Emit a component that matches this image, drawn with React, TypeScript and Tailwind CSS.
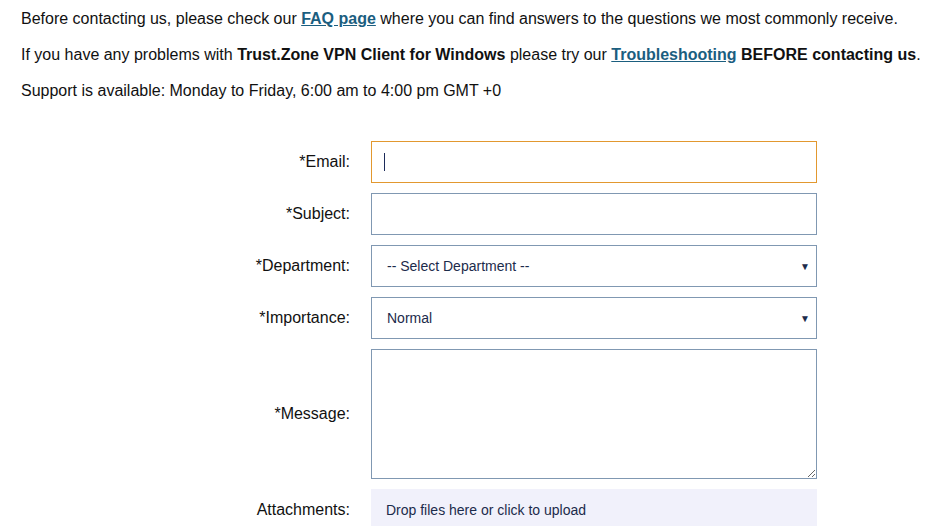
const fields = [
  { label: "*Email:", kind: "email" },
  { label: "*Subject:", kind: "text" },
  { label: "*Department:", kind: "select", value: "-- Select Department --" },
  { label: "*Importance:", kind: "select", value: "Normal" },
];

const App = () => {
  return (
    <div className="min-h-screen bg-white font-['Liberation_Sans',Arial,sans-serif] text-[16px] text-[#111]">
      {/* Intro text */}
      <div className="pl-[21px] pt-[7px]">
        <p className="leading-6 mb-3">
          Before contacting us, please check our{" "}
          <a href="#" className="font-bold text-[#1b5e7f] underline">
            FAQ page
          </a>{" "}
          where you can find answers to the questions we most commonly receive.
        </p>
        <p className="leading-6 mb-3 whitespace-nowrap">
          If you have any problems with{" "}
          <strong>Trust.Zone VPN Client for Windows</strong> please try our{" "}
          <a href="#" className="font-bold text-[#1b5e7f] underline">
            Troubleshooting
          </a>{" "}
          <strong>BEFORE contacting us</strong>.
        </p>
        <p className="leading-6">
          Support is available: Monday to Friday, 6:00 am to 4:00 pm GMT +0
        </p>
      </div>

      {/* Form */}
      <form className="pl-[20px] pt-[38px] flex flex-col gap-[10px]">
        {fields.map((field) => (
          <div key={field.label} className="flex items-center gap-[21px]">
            <label className="w-[330px] text-right text-[#111]">{field.label}</label>
            {field.kind === "email" && (
              <div className="w-[446px] h-[42px] border border-[#e2982f] bg-white flex items-center pl-[12px]">
                <span className="block w-px h-[18px] bg-[#1c2b5a]" />
              </div>
            )}
            {field.kind === "text" && (
              <div className="w-[446px] h-[42px] border border-[#8098b2] bg-white" />
            )}
            {field.kind === "select" && (
              <div className="w-[446px] h-[42px] border border-[#8098b2] bg-white flex items-center justify-between pl-[15px] pr-[6px] text-[14px] text-[#1c2b4b]">
                <span>{field.value}</span>
                <span className="text-[10px] text-[#1c2b4b]">▼</span>
              </div>
            )}
          </div>
        ))}

        <div className="flex items-center gap-[21px]">
          <label className="w-[330px] text-right text-[#111]">*Message:</label>
          <textarea className="block w-[446px] h-[130px] border border-[#8098b2] bg-white outline-none" />
        </div>

        <div className="flex items-center gap-[21px]">
          <label className="w-[330px] text-right text-[#111]">Attachments:</label>
          <div className="w-[446px] h-[42px] bg-[#f1f1fb] flex items-center pl-[15px] text-[14px] text-[#1c2b4b]">
            Drop files here or click to upload
          </div>
        </div>
      </form>
    </div>
  );
};

export default App;
